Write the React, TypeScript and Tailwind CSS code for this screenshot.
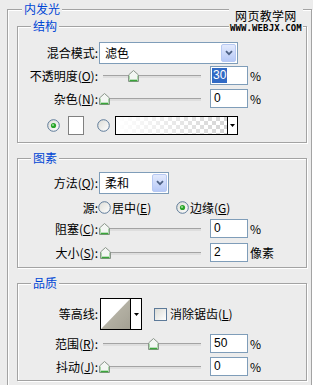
import type { ReactNode } from 'react';

function U({ c }: { c: string }) {
  return <span className="underline underline-offset-[1px]">{c}</span>;
}

function Label({ children }: { children: ReactNode }) {
  return <div className="w-[80px] shrink-0 text-right whitespace-nowrap">{children}</div>;
}

function Thumb() {
  return (
    <svg width="11" height="12" viewBox="0 0 11 12">
      <path d="M0.5 5 L5.5 0.5 L10.5 5 L10.5 11.5 L0.5 11.5 Z" fill="#f3f6f3" stroke="#8a958a" />
      <path d="M1.5 10.5 H9.5" stroke="#3aa53a" strokeWidth="1.6" />
      <path d="M1.5 9.6 V5.5 M9.5 9.6 V5.5" stroke="#a8d8a8" strokeWidth="1" />
    </svg>
  );
}

function Slider({ pos }: { pos: string }) {
  return (
    <div className="relative w-[111px] h-full shrink-0">
      <div className="absolute left-[4px] top-[9px] w-[98px] h-[3px] bg-[#dedede] border-t border-[#a3a3a3]" />
      <div className={`absolute top-[4px] ${pos}`}>
        <Thumb />
      </div>
    </div>
  );
}

function Field({ value, selected }: { value: string; selected?: boolean }) {
  return (
    <div className="w-[38px] h-[19px] shrink-0 border border-[#7f9db9] bg-white flex items-center pl-px font-['Liberation_Sans',sans-serif] text-[12px] leading-[15px]">
      {selected ? (
        <span className="bg-[#316ac5] text-white px-px">{value}</span>
      ) : (
        <span className="px-[2px]">{value}</span>
      )}
    </div>
  );
}

function SliderRow({ label, pos, value, unit, selected, mt }: { label: ReactNode; pos: string; value: string; unit: string; selected?: boolean; mt: string }) {
  return (
    <div className={`flex items-center h-[19px] ${mt}`}>
      <Label>{label}</Label>
      <div className="ml-px h-full flex">
        <Slider pos={pos} />
      </div>
      <Field value={value} selected={selected} />
      <span className="ml-[2px]">{unit}</span>
    </div>
  );
}

function Select({ w, text }: { w: string; text: string }) {
  return (
    <div className={`${w} h-[22px] ml-px border border-[#7f9db9] bg-white flex items-center`}>
      <span className="flex-1 pl-[5px]">{text}</span>
      <div className="w-[15px] h-[18px] mr-px rounded-[2px] border border-[#b7c9f3] bg-gradient-to-b from-[#e3eafd] to-[#b7c9f7] flex items-center justify-center">
        <svg width="8" height="6" viewBox="0 0 8 6">
          <path d="M1 1.2 L4 4.2 L7 1.2" stroke="#4d6185" strokeWidth="1.8" fill="none" />
        </svg>
      </div>
    </div>
  );
}

function Radio({ checked }: { checked?: boolean }) {
  return (
    <svg width="13" height="13" viewBox="0 0 13 13" className="shrink-0">
      <defs>
        <linearGradient id="rg" x1="0" y1="0" x2="1" y2="1">
          <stop offset="0" stopColor="#dcdcd6" />
          <stop offset="1" stopColor="#ffffff" />
        </linearGradient>
      </defs>
      <circle cx="6.5" cy="6.5" r="5.8" fill="url(#rg)" stroke="#5d7a99" strokeWidth="1" />
      {checked && <circle cx="6.5" cy="6.5" r="2.6" fill="#2aa52a" />}
      {checked && <circle cx="6" cy="6" r="1" fill="#9fe09f" />}
    </svg>
  );
}

function Group({ title, children, mt, pt, pb }: { title: string; children: ReactNode; mt: string; pt: string; pb: string }) {
  return (
    <fieldset className={`ml-[9px] w-[290px] border border-[#a3a3a3] shadow-[inset_1px_1px_0_#fff,1px_1px_0_#fff] ${mt} ${pt} ${pb}`}>
      <legend className="ml-[13px] px-[2px] text-[#0046d5] bg-[#ececec] leading-[14px]">{title}</legend>
      {children}
    </fieldset>
  );
}

export default function App() {
  return (
    <div className="relative w-[313px] h-[385px] overflow-hidden bg-[#ececec] text-black text-[12px] leading-[14px] font-['Noto_Sans_CJK_SC','Noto_Sans',sans-serif]">
      <fieldset className="ml-[7px] mt-[2px] w-[305px] pb-[12px] border border-[#a3a3a3] shadow-[inset_1px_1px_0_#fff,1px_1px_0_#fff]">
        <legend className="ml-[14px] px-[2px] text-[#0046d5] bg-[#ececec] leading-[14px]">内发光</legend>

        <Group title="结构" mt="mt-[3px]" pt="pt-[9px]" pb="pb-[7px]">
          <div className="flex items-center h-[22px]">
            <Label>混合模式:</Label>
            <Select w="w-[139px]" text="滤色" />
          </div>
          <SliderRow label={<>不透明度(<U c="O" />):</>} pos="left-[29px]" value="30" unit="%" selected mt="mt-[2px]" />
          <SliderRow label={<>杂色(<U c="N" />):</>} pos="left-0" value="0" unit="%" mt="mt-[4px]" />
          <div className="flex items-center h-[19px] mt-[8px]">
            <div className="ml-[29px]">
              <Radio checked />
            </div>
            <div className="ml-[8px] w-[16px] h-[19px] border border-[#808080] bg-white" />
            <div className="ml-[13px]">
              <Radio />
            </div>
            <div className="ml-[5px] w-[123px] h-[19px] border border-black flex bg-white">
              <div className="flex-1 bg-[repeating-conic-gradient(#d4d4d4_0_25%,#ffffff_0_50%)] bg-[length:8px_8px]">
                <div className="w-full h-full bg-gradient-to-r from-white to-transparent" />
              </div>
              <div className="w-[10px] border-l border-black flex items-center justify-center bg-white">
                <svg width="5" height="3" viewBox="0 0 5 3">
                  <path d="M0 0 H5 L2.5 3 Z" fill="#000" />
                </svg>
              </div>
            </div>
          </div>
        </Group>

        <Group title="图素" mt="mt-[8px]" pt="pt-[7px]" pb="pb-[5px]">
          <div className="flex items-center h-[22px]">
            <Label>方法(<U c="Q" />):</Label>
            <Select w="w-[70px]" text="柔和" />
          </div>
          <div className="flex items-center h-[19px] mt-[4px]">
            <Label>源:</Label>
            <div className="w-[78px] flex items-center">
              <Radio />
              <span className="ml-px">居中(<U c="E" />)</span>
            </div>
            <Radio checked />
            <span className="ml-px">边缘(<U c="G" />)</span>
          </div>
          <SliderRow label={<>阻塞(<U c="C" />):</>} pos="left-0" value="0" unit="%" mt="mt-[2px]" />
          <SliderRow label={<>大小(<U c="S" />):</>} pos="left-[1px]" value="2" unit="像素" mt="mt-[5px]" />
        </Group>

        <Group title="品质" mt="mt-[8px]" pt="pt-[8px]" pb="pb-[4px]">
          <div className="flex items-center h-[32px]">
            <Label>等高线:</Label>
            <div className="ml-[2px] w-[42px] h-[32px] border border-black bg-white flex">
              <svg width="29" height="30" viewBox="0 0 29 30" className="shrink-0">
                <defs>
                  <linearGradient id="cg" x1="0" y1="0" x2="1" y2="1">
                    <stop offset="0" stopColor="#c4c1b4" />
                    <stop offset="1" stopColor="#a3a093" />
                  </linearGradient>
                </defs>
                <path d="M0 30 L29 0 L29 30 Z" fill="url(#cg)" />
              </svg>
              <div className="flex-1 border-l border-black flex items-center justify-center">
                <svg width="5" height="3" viewBox="0 0 5 3">
                  <path d="M0 0 H5 L2.5 3 Z" fill="#000" />
                </svg>
              </div>
            </div>
            <div className="ml-[12px] w-[13px] h-[13px] border border-[#5d7a99] bg-gradient-to-br from-[#dcdcd6] to-white" />
            <span className="ml-[3px]">消除锯齿(<U c="L" />)</span>
          </div>
          <SliderRow label={<>范围(<U c="R" />):</>} pos="left-[49px]" value="50" unit="%" mt="mt-[4px]" />
          <SliderRow label={<>抖动(<U c="J" />):</>} pos="left-0" value="0" unit="%" mt="mt-[4px]" />
        </Group>
      </fieldset>

      <div className="absolute top-[9px] left-[229px] bg-[#ececec] flex flex-col items-center px-[1px]">
        <span className="text-[12px] leading-[13px] font-['Noto_Sans_CJK_SC',sans-serif] tracking-[0.3px]">网页教学网</span>
        <span className="mt-[2px] text-[9px] leading-[8px] font-bold font-['DejaVu_Sans_Mono',monospace] tracking-[0.1px]">WWW.WEBJX.COM</span>
      </div>
    </div>
  );
}
